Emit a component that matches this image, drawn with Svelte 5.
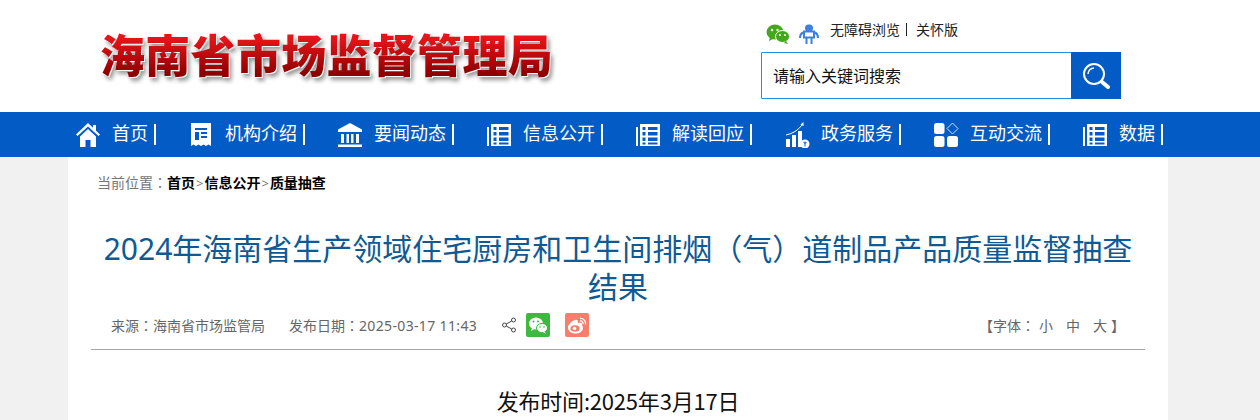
<script>
  const nav = [
    { label: '首页', icon: 'home' },
    { label: '机构介绍', icon: 'receipt' },
    { label: '要闻动态', icon: 'bank' },
    { label: '信息公开', icon: 'table' },
    { label: '解读回应', icon: 'table' },
    { label: '政务服务', icon: 'chart' },
    { label: '互动交流', icon: 'grid' },
    { label: '数据', icon: 'table' }
  ];
</script>

<header class="top">
  <div class="logo">海南省市场监督管理局</div>
  <div class="tools">
    <div class="links">
      <svg class="wx" viewBox="0 0 24 20" width="24" height="20">
        <ellipse cx="9" cy="8" rx="8.500" ry="7.500" fill="#45a81c"/>
        <path d="M4 13l-1 4 4-2z" fill="#45a81c"/>
        <ellipse cx="16.500" cy="12.500" rx="7" ry="6" fill="#45a81c" stroke="#fff"/>
        <path d="M20 17l2 3-4-1z" fill="#45a81c"/>
        <circle cx="6" cy="6" r="1.200" fill="#fff"/><circle cx="11.500" cy="6" r="1.200" fill="#fff"/>
        <circle cx="14" cy="11" r="1" fill="#fff"/><circle cx="19" cy="11" r="1" fill="#fff"/>
      </svg>
      <svg class="robot" viewBox="0 0 20 20" width="20" height="20">
        <rect x="6" y="0.500" width="8" height="7" rx="3.500" fill="#3f80de"/>
        <rect x="5" y="7.500" width="10" height="6" fill="none" stroke="#3f80de" stroke-width="2"/>
        <path d="M4 8.500Q1 10 1 14M16 8.500Q19 10 19 14" fill="none" stroke="#3f80de" stroke-width="2"/>
        <path d="M7.500 14v6M12.500 14v6" stroke="#3f80de" stroke-width="2"/>
      </svg>
      <span class="txt first">无障碍浏览</span><i class="bar"></i><span class="txt">关怀版</span>
    </div>
    <div class="search">
      <div class="field">请输入关键词搜索</div>
      <div class="btn">
        <svg viewBox="0 0 30 30" width="30" height="30">
          <circle cx="13" cy="13" r="10" fill="none" stroke="#fff" stroke-width="2"/>
          <path d="M7 13a6 6 0 0 1 6-6" fill="none" stroke="#fff" stroke-width="1.500"/>
          <path d="M21 21l6 5" stroke="#fff" stroke-width="4" stroke-linecap="round"/>
        </svg>
      </div>
    </div>
  </div>
</header>

<nav class="nav">
  {#each nav as item}
    <div class="item">
      <svg class="nicon" viewBox="0 0 26 26" width="26" height="26">
        {#if item.icon === 'home'}
          <path d="M13 1 1 12.500l1.500 1.500L13 4.500 23.500 14l1.500-1.500-4-3.800V3h-3v2.700z" fill="#fff"/>
          <path d="M5 14.500 13 7l8 7.500V25h-5.500v-7h-5v7H5z" fill="#fff"/>
        {:else if item.icon === 'receipt'}
          <path d="M3 1h20v23l-2.500-1.500L18 24l-2.500-1.500L13 24l-2.500-1.500L8 24l-2.500-1.500L3 24z" fill="#fff"/>
          <path d="M7 6h12v2H7zM7 10h4v8H7zM13 10h6v2h-6zM13 14h6v2h-6z" fill="#035bc5"/>
        {:else if item.icon === 'bank'}
          <path d="M13 1 1 7.500V10h24V7.500z" fill="#fff"/>
          <path d="M4 12h3v9H4zM9.500 12h2.500v9H9.500zM14 12h2.500v9H14zM19 12h3v9h-3zM1 22.500h24V25H1z" fill="#fff"/>
        {:else if item.icon === 'table'}
          <path d="M1 5h2v19H1zM5 2h20v22H5z" fill="#fff"/>
          <path d="M7.500 5h3v3h-3zM13 5h9.500v3H13zM7.500 10h3v3.500h-3zM13 10h9.500v3.500H13zM7.500 15.500h3V19h-3zM13 15.500h9.500V19H13zM7.500 20.500h3v2h-3zM13 20.500h9.500v2H13z" fill="#035bc5"/>
        {:else if item.icon === 'chart'}
          <path d="M2 17h4v8H2zM8 13h4v12H8zM14 9h4v16h-4z" fill="#fff"/>
          <path d="M2 13Q12 11 18 3" fill="none" stroke="#fff"/>
          <path d="M19.500 0l-3 2.500 3 1.500z" fill="#fff"/>
          <circle cx="21" cy="22" r="4.500" fill="#fff"/>
          <path d="M21 19.500v5M19.500 20l1.500 1.500 1.500-1.500" fill="none" stroke="#035bc5"/>
        {:else}
          <rect x="1" y="1" width="10.500" height="11" rx="2.500" fill="#fff"/>
          <rect x="1" y="14" width="10.500" height="11" rx="2.500" fill="#fff"/>
          <rect x="14" y="14" width="11" height="11" rx="2.500" fill="#fff"/>
          <path d="M19.500 1l5.500 5.500-5.500 5.500-5.500-5.500z" fill="none" stroke="#cfe0f5"/>
        {/if}
      </svg>
      <span class="label">{item.label}</span>
      <i class="sep"></i>
    </div>
  {/each}
</nav>

<main class="page">
  <div class="crumb">当前位置<span class="tc">：</span><b>首页</b><span class="gt">&gt;</span><b>信息公开</b><span class="gt">&gt;</span><b>质量抽查</b></div>
  <h1>2024年海南省生产领域住宅厨房和卫生间排烟（气）道制品产品质量监督抽查结果</h1>
  <div class="meta">
    <span class="source">来源<span class="tc">：</span>海南省市场监管局</span>
    <span class="date">发布日期<span class="tc">：</span><span class="num">2025-03-17 11:43</span></span>
    <svg class="share" viewBox="0 0 16 16" width="16" height="16">
      <g fill="none" stroke="#444" stroke-width="1">
        <circle cx="3.500" cy="8" r="2"/><circle cx="12.500" cy="3" r="2"/><circle cx="12.500" cy="13" r="2"/>
        <path d="M5.300 7 10.700 4M5.300 9l5.400 3"/>
      </g>
    </svg>
    <span class="sq green">
      <svg viewBox="0 0 24 24" width="24" height="24">
        <ellipse cx="10" cy="10.500" rx="7" ry="6" fill="#fff"/>
        <path d="M6 15l-1 3 3.500-2z" fill="#fff"/>
        <ellipse cx="16" cy="15" rx="5.500" ry="4.600" fill="#fff" stroke="#3cba3f"/>
        <path d="M18.500 18.500l1.500 2-3-1z" fill="#fff"/>
        <circle cx="7.500" cy="8.500" r="1" fill="#3cba3f"/><circle cx="12" cy="8.500" r="1" fill="#3cba3f"/>
        <circle cx="14" cy="14" r=".8" fill="#3cba3f"/><circle cx="18" cy="14" r=".8" fill="#3cba3f"/>
      </svg>
    </span>
    <span class="sq red">
      <svg viewBox="0 0 24 24" width="24" height="24">
        <ellipse cx="10.500" cy="15" rx="7.500" ry="5.500" fill="#fff"/>
        <path d="M3 15c0-4 6-9 9-8 2 1 0 3 1 3 3-1 5 0 4 3" fill="#fff"/>
        <ellipse cx="10" cy="15.500" rx="4.500" ry="3.300" fill="#f97d6c"/>
        <circle cx="9.500" cy="15.500" r="1.800" fill="#fff"/>
        <path d="M15 5.500a5 5 0 0 1 5.500 6M15 8a2.500 2.500 0 0 1 3 3" fill="none" stroke="#fff" stroke-width="1.300"/>
      </svg>
    </span>
    <div class="font">
      <span>【字体<span class="tc">：</span></span>
      <span class="sz s1">小</span><span class="sz">中</span><span class="sz">大</span>
      <span class="end">】</span>
    </div>
  </div>
  <div class="published">发布时间:2025年3月17日</div>
</main>

<style>
  :global(body) {
    margin: 0;
    background: #f1f1f1;
    font-family: "Noto Sans", "Noto Sans CJK SC", sans-serif;
    height: 420px;
    overflow: hidden;
    text-spacing-trim: space-all;
  }
  .tc { font-family: "Noto Sans CJK TC", sans-serif; line-height: 0; }
  .top {
    height: 112px;
    background: #fff;
    display: flex;
    justify-content: space-between;
    box-sizing: border-box;
    padding: 0 139px 0 100px;
  }
  .logo {
    margin-top: 26px;
    height: 60px;
    line-height: 60px;
    font-size: 45px;
    letter-spacing: .3px;
    font-weight: 900;
    white-space: nowrap;
    background: linear-gradient(#e8141a 20%, #8e0000 80%);
    -webkit-background-clip: text;
    background-clip: text;
    color: transparent;
    filter: drop-shadow(1px 1px 0 #fff) drop-shadow(2px 3px 2px rgba(0, 0, 0, .4));
  }
  .tools {
    width: 360px;
    display: flex;
    flex-direction: column;
  }
  .links {
    height: 52px;
    display: flex;
    align-items: flex-start;
    font-size: 14px;
    color: #222;
    box-sizing: border-box;
    padding: 22px 0 0 5px;
  }
  .wx { margin-top: 2px; }
  .robot { margin: 2px 0 0 9px; }
  .txt { line-height: 16px; }
  .first { margin-left: 11px; }
  .bar {
    width: 1px;
    height: 13px;
    margin: 1px 9px 0 6px;
    background: #222;
  }
  .search {
    height: 47px;
    box-sizing: border-box;
    display: flex;
    border: 1px solid #1e92e0;
    border-radius: 1px;
  }
  .field {
    flex: 1;
    padding-left: 11px;
    font-size: 16px;
    line-height: 47px;
    color: #111;
  }
  .btn {
    width: 50px;
    margin: -1px -1px -1px 0;
    background: #035bc5;
    display: flex;
    align-items: center;
    justify-content: center;
  }
  .nav {
    height: 45px;
    background: #035bc5;
    display: flex;
    align-items: center;
    padding-left: 75px;
  }
  .item {
    display: flex;
    align-items: center;
    padding-right: 32px;
    color: #fff;
  }
  .nicon { margin-right: 11px; flex: none; }
  .label { font-size: 18px; line-height: 24px; white-space: nowrap; padding-bottom: 3px; }
  .sep {
    width: 2px;
    height: 21px;
    margin-left: 6px;
    background: #fff;
  }
  .page {
    width: 1100px;
    margin-left: 68px;
    background: #fff;
    height: 263px;
    overflow: hidden;
    box-sizing: border-box;
    padding: 0 23px;
  }
  .crumb {
    margin: 17px 0 0 6px;
    font-size: 14px;
    line-height: 18px;
    color: #777;
  }
  .crumb b { color: #000; font-weight: 700; }
  .gt { margin: 0 1px; font-size: 13px; }
  h1 {
    margin: 38px 0 0;
    padding: 0 6px;
    font-size: 30px;
    font-weight: 400;
    line-height: 38px;
    text-align: center;
    color: #0f5a94;
  }
  .meta {
    display: flex;
    align-items: center;
    height: 37px;
    border-bottom: 1px solid #a5a5a5;
    padding: 0 20px 6px;
    font-size: 14px;
    color: #666;
  }
  .date { margin-left: 24px; }
  .num { letter-spacing: .35px; }
  .share { margin-left: 24px; }
  .sq {
    width: 24px;
    height: 24px;
    border-radius: 2px;
    display: block;
  }
  .sq svg { display: block; }
  .green { background: #3cba3f; margin-left: 9px; }
  .red { background: #f97d6c; margin-left: 15px; }
  .font {
    margin-left: auto;
    display: flex;
    color: #666;
  }
  .sz { margin-left: 13px; }
  .s1 { margin-left: 4px; }
  .end { margin-left: 4px; }
  .published {
    margin-top: 35px;
    text-align: center;
    font-family: "Noto Sans CJK SC", sans-serif;
    font-size: 22px;
    letter-spacing: -.2px;
    line-height: 30px;
    color: #111;
  }
</style>
